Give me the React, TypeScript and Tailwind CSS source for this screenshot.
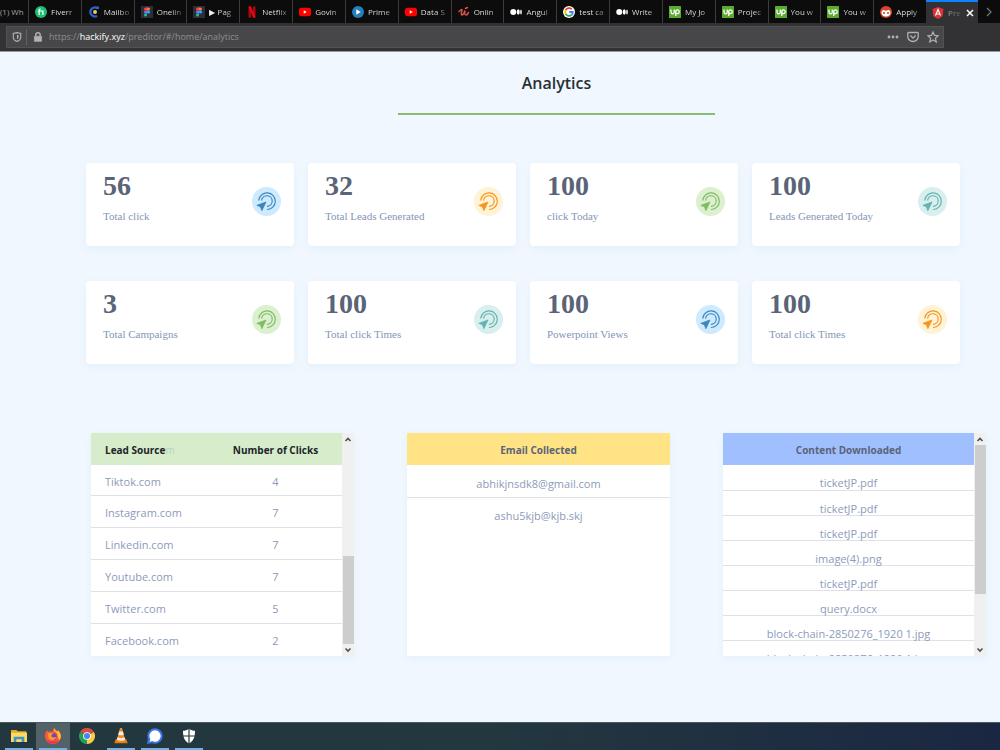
import React from 'react';

type Tone = 'blue' | 'orange' | 'green' | 'teal';

interface Stat {
  value: number;
  label: string;
  tone: Tone;
}

interface Tab {
  title: string;
  icon: string;
}

const TABS: Tab[] = [
  { title: 'Fiverr', icon: 'fiverr' },
  { title: 'Mailbo', icon: 'mail' },
  { title: 'Onelin', icon: 'figma' },
  { title: '▶ Pag', icon: 'figma' },
  { title: 'Netflix', icon: 'netflix' },
  { title: 'Govin', icon: 'youtube' },
  { title: 'Prime', icon: 'prime' },
  { title: 'Data S', icon: 'youtube' },
  { title: 'Onlin', icon: 'udemy' },
  { title: 'Angul', icon: 'medium' },
  { title: 'test ca', icon: 'google' },
  { title: 'Write', icon: 'medium' },
  { title: 'My Jo', icon: 'upwork' },
  { title: 'Projec', icon: 'upwork' },
  { title: 'You w', icon: 'upwork' },
  { title: 'You w', icon: 'upwork' },
  { title: 'Apply', icon: 'apply' },
];

const STATS: Stat[] = [
  { value: 56, label: 'Total click', tone: 'blue' },
  { value: 32, label: 'Total Leads Generated', tone: 'orange' },
  { value: 100, label: 'click Today', tone: 'green' },
  { value: 100, label: 'Leads Generated Today', tone: 'teal' },
  { value: 3, label: 'Total Campaigns', tone: 'green' },
  { value: 100, label: 'Total click Times', tone: 'teal' },
  { value: 100, label: 'Powerpoint Views', tone: 'blue' },
  { value: 100, label: 'Total click Times', tone: 'orange' },
];

const TONES: Record<Tone, string> = {
  blue: 'bg-[#cdeaff] text-[#3d86bd]',
  orange: 'bg-[#fff3d6] text-[#f7931e]',
  green: 'bg-[#dcf0d0] text-[#7fbc62]',
  teal: 'bg-[#d8efee] text-[#62b3b3]',
};

const LEADS: [string, number][] = [
  ['Tiktok.com', 4],
  ['Instagram.com', 7],
  ['Linkedin.com', 7],
  ['Youtube.com', 7],
  ['Twitter.com', 5],
  ['Facebook.com', 2],
];

const EMAILS = ['abhikjnsdk8@gmail.com', 'ashu5kjb@kjb.skj'];

const FILES = [
  'ticketJP.pdf',
  'ticketJP.pdf',
  'ticketJP.pdf',
  'image(4).png',
  'ticketJP.pdf',
  'query.docx',
  'block-chain-2850276_1920 1.jpg',
  'block-chain-2850276_1920 1.jpg',
];

const Favicon: React.FC<{ name: string }> = ({ name }) => (
  <svg viewBox="0 0 24 24" className="size-3 shrink-0" aria-hidden="true">
    {name === 'fiverr' && (
      <>
        <circle cx="12" cy="12" r="12" fill="#1dbf73" />
        <path d="M7 18v-7H5.500V9H7c0-3 1.500-4 4.500-4v2.200c-1.500 0-2 .3-2 1.800H17v9h-2.600v-7H9.500v7z" fill="#fff" />
      </>
    )}
    {name === 'mail' && (
      <>
        <path d="M19 4.500A9 9 0 1 0 18 20" fill="none" stroke="#2f62c9" strokeWidth="4.500" />
        <circle cx="14" cy="12" r="4" fill="#e9c46a" />
        <path d="M17 1h5v5h-5z" fill="#2f62c9" />
      </>
    )}
    {name === 'figma' && (
      <>
        <rect width="24" height="24" fill="#2c2f3a" />
        <path d="M12 3H9a3 3 0 0 0 0 6h3z" fill="#f24e1e" />
        <path d="M12 3h3a3 3 0 0 1 0 6h-3z" fill="#ff7262" />
        <path d="M12 9H9a3 3 0 0 0 0 6h3z" fill="#a259ff" />
        <circle cx="15" cy="12" r="3" fill="#1abcfe" />
        <path d="M12 15H9a3 3 0 1 0 3 3z" fill="#0acf83" />
      </>
    )}
    {name === 'netflix' && (
      <>
        <path d="M5 1h5v22l-5 .6zM14 1h5v22.600l-5-.6z" fill="#b1060f" />
        <path d="M5 1h5l9 22.600-5-.6z" fill="#e50914" />
      </>
    )}
    {name === 'youtube' && (
      <>
        <rect y="3.500" width="24" height="17" rx="5" fill="#f00" />
        <path d="M9.500 8.500v7l6-3.500z" fill="#fff" />
      </>
    )}
    {name === 'prime' && (
      <>
        <circle cx="12" cy="12" r="12" fill="#2680b8" />
        <path d="M8.500 6.500v11l9-5.500z" fill="#fff" />
      </>
    )}
    {name === 'udemy' && (
      <path
        d="M2 11c3-3 6-5 6-3s-3 10 0 10c3 0 5-6 6-9-1 4-1 9 2 9s4-3 5-5M15 5l4-2"
        fill="none"
        stroke="#dd524c"
        strokeWidth="3"
        strokeLinecap="round"
      />
    )}
    {name === 'medium' && (
      <>
        <circle cx="6.500" cy="12" r="6" fill="#fff" />
        <ellipse cx="16.500" cy="12" rx="3" ry="5.500" fill="#fff" />
        <ellipse cx="22" cy="12" rx="1.600" ry="5" fill="#fff" />
      </>
    )}
    {name === 'google' && (
      <>
        <circle cx="12" cy="12" r="12" fill="#fff" />
        <g fill="none" strokeWidth="3.600">
          <path d="M17.500 6.500A7.700 7.700 0 0 0 5.300 8.200" stroke="#ea4335" />
          <path d="M5.300 8.200a7.700 7.700 0 0 0 0 7.600" stroke="#fbbc05" />
          <path d="M5.300 15.800a7.700 7.700 0 0 0 11.700 2.100" stroke="#34a853" />
          <path d="M17 17.900A7.700 7.700 0 0 0 19.700 12H12.500" stroke="#4285f4" />
        </g>
      </>
    )}
    {name === 'upwork' && (
      <>
        <rect width="24" height="24" rx="1" fill="#5bab2e" />
        <path
          d="M4 7v5c0 5 6.500 5 6.500 0V7M13.500 20v-8.500c0-5 7-5 7 0s-7 5-7 0"
          fill="none"
          stroke="#fff"
          strokeWidth="2.600"
        />
      </>
    )}
    {name === 'apply' && (
      <>
        <circle cx="12" cy="12" r="12" fill="#d8452c" />
        <path d="M3 14c0-5 3-7 5-6l4 2 4-2c2-1 5 1 5 6 0 4-4 7-9 7s-9-3-9-7z" fill="#fff" />
        <circle cx="8" cy="14" r="2" fill="#c9402b" />
        <circle cx="16" cy="14" r="2" fill="#c9402b" />
      </>
    )}
    {name === 'angular' && (
      <>
        <path d="M12 0 1 4l1.700 14.500L12 24l9.300-5.500L23 4z" fill="#dd3238" />
        <path d="m7 17 5-12 5 12M9 14h6" fill="none" stroke="#fff" strokeWidth="2.200" />
      </>
    )}
  </svg>
);

const BrowserBar = () => (
  <header className="bg-[#323234] text-[8px] text-[#f0f0f0]">
    <nav className="flex h-[23px] bg-[#0c0c0d]" aria-label="Open tabs">
      <div className="flex w-7 shrink-0 items-center whitespace-nowrap text-[#a5a5a6]">(1) Wh</div>
      {TABS.map((tab, i) => (
        <button
          key={i}
          className="flex min-w-0 flex-1 items-center gap-1 border-l border-[#3c3c3e] pl-1.5"
        >
          <Favicon name={tab.icon} />
          <span className="flex-1 whitespace-nowrap bg-linear-to-r from-[#f0f0f0] from-50% to-[#333] to-95% bg-clip-text text-left text-transparent">
            {tab.title}
          </span>
        </button>
      ))}
      <div className="flex min-w-0 flex-1 items-center gap-1 border-t-2 border-[#0a84ff] bg-[#323234] pl-1.5">
        <Favicon name="angular" />
        <span className="whitespace-nowrap bg-linear-to-r from-[#aaa] to-[#555] bg-clip-text text-transparent">Pre</span>
        <button aria-label="Close tab">
          <svg viewBox="0 0 10 10" className="size-2.5" stroke="#fff" strokeWidth="1.500">
            <path d="m2 2 6 6M8 2 2 8" />
          </svg>
        </button>
      </div>
      <button className="flex w-[22px] shrink-0 items-center justify-center" aria-label="Scroll tabs">
        <svg viewBox="0 0 10 10" className="size-2.5" fill="none" stroke="#77777a" strokeWidth="1.200">
          <path d="m3 1 4 4-4 4" />
        </svg>
      </button>
    </nav>
    <div className="flex h-[29px] items-center border-b border-[#9a9a9c] pl-1.5 pr-14">
      <div className="flex h-[22px] flex-1 items-center border border-[#525254] bg-[#474749] text-[#b1b1b3]">
        <div className="flex h-4 w-5 items-center justify-center border-r border-[#626264]">
          <svg viewBox="0 0 16 16" className="size-2.5" fill="none" stroke="currentColor" strokeWidth="1.800">
            <path d="M8 1 2 2.500V8c0 3.500 2.500 6 6 7 3.500-1 6-3.500 6-7V2.500z" />
            <path d="M8 4.500v7c1.600-.8 2.500-2 2.500-3.500V5z" fill="currentColor" stroke="none" />
          </svg>
        </div>
        <svg viewBox="0 0 12 14" className="ml-1.5 h-2.5 w-2.5" fill="none" stroke="currentColor" strokeWidth="2">
          <path d="M3 6V4a3 3 0 0 1 6 0v2" />
          <path d="M1 6h10v7H1z" fill="currentColor" strokeWidth="1" />
        </svg>
        <div className="ml-1.5 flex-1 text-[9px] text-[#8e8e90]">
          https://<span className="text-white">hackify.xyz</span>/preditor/#/home/analytics
        </div>
        <div className="flex items-center gap-2 pr-1">
          <button aria-label="Page actions">
            <svg viewBox="0 0 12 4" className="w-3" fill="currentColor">
              <circle cx="2" cy="2" r="1.400" />
              <circle cx="6" cy="2" r="1.400" />
              <circle cx="10" cy="2" r="1.400" />
            </svg>
          </button>
          <button aria-label="Save to Pocket">
            <svg viewBox="0 0 16 16" className="size-3" fill="none" stroke="currentColor" strokeWidth="1.700">
              <path d="M2 2h12a1 1 0 0 1 1 1v4a7 7 0 0 1-14 0V3a1 1 0 0 1 1-1z" />
              <path d="m4.500 6 3.500 3.500L11.500 6" />
            </svg>
          </button>
          <button aria-label="Bookmark this page">
            <svg viewBox="0 0 16 16" className="size-3" fill="none" stroke="currentColor" strokeWidth="1.600">
              <path d="m8 1.200 2 4.600 5 .5-3.800 3.300 1.200 5L8 12l-4.400 2.600 1.200-5L1 6.300l5-.5z" />
            </svg>
          </button>
        </div>
      </div>
    </div>
  </header>
);

const ClickIcon = () => (
  <svg viewBox="0 0 30 30" className="size-[29px]" fill="none" stroke="currentColor" strokeWidth="1.200" aria-hidden="true">
    <path d="M7 13.500A8.600 8.600 0 1 1 16 23.300" strokeLinecap="round" />
    <path d="M10 13.500a5.500 5.500 0 1 1 6 6.500" strokeLinecap="round" />
    <path d="m14.500 15.500-9.500 3.500 3.700 1.500 1.500 4z" fill="currentColor" strokeLinejoin="round" strokeWidth=".8" />
  </svg>
);

const StatCard: React.FC<Stat> = ({ value, label, tone }) => (
  <div className="flex h-[83px] items-start justify-between rounded bg-white pl-[17px] pr-[13px] pt-2 shadow-[0_3px_10px_#e2f0fb]">
    <div className="font-['Liberation_Serif',serif]">
      <div className="text-[28px] font-bold leading-[30px] text-[#5a6478]">{value}</div>
      <div className="mt-1.5 text-[11px] leading-[18px] text-[#8595b5]">{label}</div>
    </div>
    <div className={`mt-4 rounded-full ${TONES[tone]}`}>
      <ClickIcon />
    </div>
  </div>
);

const Scrollbar: React.FC<{ atEnd?: boolean }> = ({ atEnd }) => (
  <div className="flex w-3 shrink-0 flex-col items-center bg-[#f0f0f0]" aria-hidden="true">
    <svg viewBox="0 0 12 12" className="size-3" fill="none" stroke="#505050" strokeWidth="1.600">
      <path d="m3.500 8 2.500-2.500 2.500 2.500" />
    </svg>
    <div className={`flex min-h-0 w-full flex-1 flex-col ${atEnd ? 'justify-end' : ''}`}>
      <div className={`ml-px bg-[#cdcdcd] ${atEnd ? 'h-[44%]' : 'h-3/4'}`} />
    </div>
    <svg viewBox="0 0 12 12" className="size-3" fill="none" stroke="#505050" strokeWidth="1.600">
      <path d="m3.500 4.500 2.500 2.500 2.500-2.500" />
    </svg>
  </div>
);

const PANEL = 'flex h-[223px] min-w-0 overflow-hidden bg-white shadow-[0_2px_8px_#e2f0fb]';

const LeadSources = () => (
  <section className={PANEL}>
    <table className="h-fit flex-1 text-[#8c9bba]">
      <thead>
        <tr className="h-8 bg-[#d6ecca] text-[10px] text-[#212529]">
          <th className="w-[47%] pl-3.5 pt-0.5 text-left font-bold">
            Lead Source
            <span className="font-normal text-[#b9d3b6]" aria-hidden="true">m</span>
          </th>
          <th className="pt-0.5 font-bold">Number of Clicks</th>
        </tr>
      </thead>
      <tbody>
        {LEADS.map(([source, clicks]) => (
          <tr key={source} className="h-8 border-b border-[#dee2e6] first:h-[30px] last:border-0">
            <td className="pl-3.5 pt-1">{source}</td>
            <td className="pt-1 text-center">{clicks}</td>
          </tr>
        ))}
      </tbody>
    </table>
    <Scrollbar atEnd />
  </section>
);

const Emails = () => (
  <section className={PANEL}>
    <table className="h-fit flex-1 text-center text-[#8c9bba]">
      <thead>
        <tr className="h-8 bg-[#ffe385] text-[10px] text-[#5a6478]">
          <th className="pt-0.5 font-bold">Email Collected</th>
        </tr>
      </thead>
      <tbody>
        {EMAILS.map(email => (
          <tr key={email} className="h-8 border-b border-[#dee2e6] last:border-0">
            <td className="pt-1.5">{email}</td>
          </tr>
        ))}
      </tbody>
    </table>
  </section>
);

const Downloads = () => (
  <section className={PANEL}>
    <table className="h-fit flex-1 text-center text-[#8c9bba]">
      <thead>
        <tr className="h-8 bg-[#9fbfff] text-[10px] text-[#5a6478]">
          <th className="pt-0.5 font-bold">Content Downloaded</th>
        </tr>
      </thead>
      <tbody>
        {FILES.map((file, i) => (
          <tr key={i} className="h-[25px] border-b border-[#dee2e6]">
            <td className="pt-3 leading-3">{file}</td>
          </tr>
        ))}
      </tbody>
    </table>
    <Scrollbar />
  </section>
);

const APPS = ['Files', 'Firefox', 'Chrome', 'VLC', 'Signal', 'Security'];

const AppIcon: React.FC<{ name: string }> = ({ name }) => (
  <svg viewBox="0 0 24 24" className="size-4" aria-hidden="true">
    {name === 'Files' && (
      <>
        <path d="M0 3h8l2 2h13v6H0z" fill="#e8a824" />
        <path d="M0 7h24v14H0z" fill="#ffd966" />
        <path d="M4 21v-8h16v8h-4v-4H8v4z" fill="#3d96c9" />
      </>
    )}
    {name === 'Firefox' && (
      <>
        <path d="M12 24A12 12 0 0 1 0 12c0-4 1.500-6.500 3.500-8.500L5 6l3-2 2 3c1-3 2.500-5.500 4-7 .5 3 3 4 5 6V3c3 2.500 5 6 5 9a12 12 0 0 1-12 12z" fill="#ff5a36" />
        <path d="M14 0c.5 3 3 4 5 6V3c5 4 6 11 3 15-3-2-2-10-6-12-2-1-3-3-2-6z" fill="#ffc531" />
        <path d="M3 16c3 5 12 6 17 2-3 7-14 8-17-2z" fill="#f5246c" />
        <circle cx="12" cy="13" r="5.500" fill="#7541c7" />
        <path d="M5 8c4-1 6 0 8 1-3 0-4 2-3 4 2 2 5 1 7 0-1 5-7 7-10 4-2-2-3-5-2-9z" fill="#ff9a27" />
      </>
    )}
    {name === 'Chrome' && (
      <>
        <path d="M12 12 1.600 6A12 12 0 0 1 22.400 6z" fill="#dd4b3e" />
        <path d="M12 12 22.400 6A12 12 0 0 1 12 24z" fill="#fbcb43" />
        <path d="M12 12v12A12 12 0 0 1 1.600 6z" fill="#21a058" />
        <circle cx="12" cy="12" r="5.800" fill="#fff" />
        <circle cx="12" cy="12" r="4.600" fill="#4486f3" />
      </>
    )}
    {name === 'VLC' && (
      <>
        <path d="M4 17h16l2 6H2z" fill="#e87a0d" />
        <path d="M10.500 0h3L19 20q-7 3-14 0z" fill="#f58a1b" />
        <path d="m9.300 5-1.500 5q4 2 8.400 0l-1.500-5q-2.700 1-5.400 0zM6.700 14l-1 3.500q6.300 3 12.600 0l-1-3.500q-5.300 2.500-10.600 0z" fill="#eee" />
      </>
    )}
    {name === 'Signal' && (
      <>
        <circle cx="12" cy="12" r="11.500" fill="#3f76ee" />
        <path d="m0 24 1.500-8L8 22.500z" fill="#3f76ee" />
        <path d="M12 3.500a8.500 8.500 0 1 1-4 16l-4 1 1-4A8.500 8.500 0 0 1 12 3.500z" fill="#fff" />
      </>
    )}
    {name === 'Security' && (
      <>
        <path d="M12 1c3 2 6 3 9 3 0 10-2 15-9 19C5 19 3 14 3 4c3 0 6-1 9-3z" fill="#fff" />
        <path d="M12 1v22M3 12h18" stroke="#23373f" strokeWidth="1.800" />
      </>
    )}
  </svg>
);

const Taskbar = () => (
  <footer className="flex h-7 border-t border-[#4a5a61] bg-linear-to-r from-[#23373f] from-50% to-[#1b2742] pl-0.5">
    {APPS.map(app => (
      <button
        key={app}
        aria-label={app}
        className={`flex w-[34px] flex-col items-center px-[3px] ${app === 'Firefox' ? 'bg-[#536168]' : ''}`}
      >
        <span className="flex flex-1 items-center">
          <AppIcon name={app} />
        </span>
        <span className={`h-0.5 w-full ${app === 'Chrome' ? '' : 'bg-[#76b0e0]'}`} />
      </button>
    ))}
  </footer>
);

const App = () => (
  <div className="flex min-h-screen flex-col bg-[#f1f7fe] font-['Open_Sans','Noto_Sans',sans-serif]">
    <BrowserBar />
    <main className="flex-1 pb-16">
      <h1 className="ml-[398px] mr-[285px] border-b-2 border-[#8abb73] pb-[15px] pt-4 text-center text-base font-semibold leading-[30px] text-[#292f36]">
        Analytics
      </h1>
      <div className="ml-[86px] mr-10 mt-12 grid grid-cols-4 gap-x-3.5 gap-y-[35px]">
        {STATS.map((stat, i) => (
          <StatCard key={i} {...stat} />
        ))}
      </div>
      <div className="ml-[91px] mr-3.5 mt-[69px] grid grid-cols-3 gap-x-[53px] text-[11px]">
        <LeadSources />
        <Emails />
        <Downloads />
      </div>
    </main>
    <Taskbar />
  </div>
);

export default App;
